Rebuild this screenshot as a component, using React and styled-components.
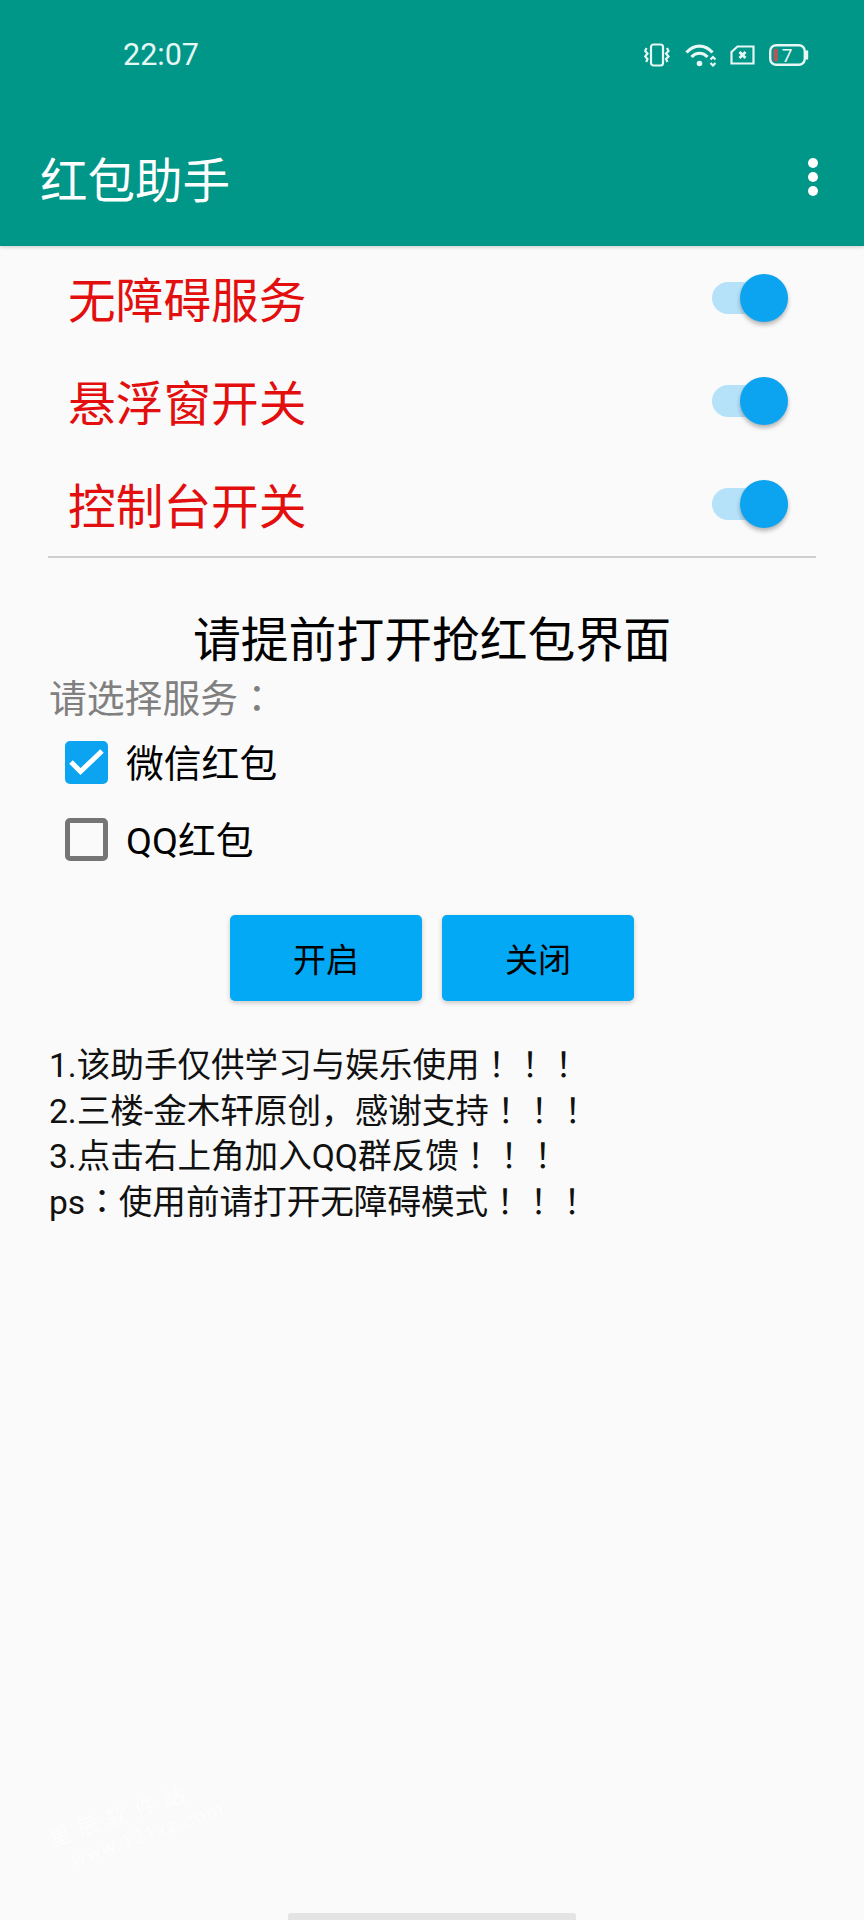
import styled, { createGlobalStyle } from "styled-components";

const GlobalStyle = createGlobalStyle`
    html, body {
        margin: 0;
        padding: 0;
        background: #fafafa;
    }
`;

const Page = styled.div`
    position: relative;
    width: 864px;
    height: 1920px;
    overflow: hidden;
    display: flex;
    flex-direction: column;
    background: #fafafa;
    color: #000;
    font-family: Roboto, "Noto Sans CJK SC", sans-serif;
`;

const Header = styled.header`
    background: #009688;
    height: 246px;
    box-shadow: 0 1px 4px rgba(0, 0, 0, 0.2);
    flex-shrink: 0;
`;

const StatusBar = styled.div`
    height: 110px;
    padding: 0 55px 0 123px;
    box-sizing: border-box;
    display: flex;
    align-items: center;
    justify-content: space-between;
    color: #e6f7f4;
`;

const Clock = styled.span`
    font-size: 30.5px;
    line-height: 36px;
`;

const StatusIcons = styled.div`
    display: flex;
    align-items: center;
    gap: 14px;
`;

const Toolbar = styled.div`
    height: 136px;
    padding: 0 46px 2px 40px;
    box-sizing: border-box;
    display: flex;
    align-items: center;
    justify-content: space-between;
`;

const AppTitle = styled.h1`
    margin: 0;
    font-size: 47.5px;
    font-weight: 400;
    color: #fff;
`;

const SwitchRow = styled.div`
    height: 103px;
    padding: 0 76px 0 68px;
    display: flex;
    align-items: center;
    justify-content: space-between;
`;

const SwitchLabel = styled.span`
    font-size: 47.7px;
    color: #e30e0e;
`;

const Track = styled.div`
    width: 76px;
    height: 32px;
    border-radius: 16px;
    background: #b5e1f9;
    display: flex;
    align-items: center;
    justify-content: flex-end;
`;

const Thumb = styled.div`
    width: 48px;
    height: 48px;
    border-radius: 50%;
    background: #0ca4f0;
    box-shadow: 0 3px 4px rgba(0, 0, 0, 0.28);
`;

const Divider = styled.div`
    height: 2px;
    margin: 1px 48px 0;
    background: #cfcfcf;
`;

const Notice = styled.div`
    margin-top: 48px;
    font-size: 47.8px;
    line-height: 70px;
    text-align: center;
`;

const SelectLabel = styled.div`
    padding-left: 49px;
    font-size: 37.8px;
    line-height: 46px;
    color: #808080;
`;

const CheckList = styled.div`
    margin-top: 2px;
    padding-left: 65px;
`;

const CheckRow = styled.div`
    height: 77px;
    display: flex;
    align-items: center;
    gap: 18px;
`;

const CheckText = styled.span`
    font-size: 37.8px;
    padding-bottom: 4px;
`;

const CheckBox = styled.div`
    width: 43px;
    height: 43px;
    box-sizing: border-box;
    border-radius: 5px;
    background: ${props => (props.$checked ? "#0ca4f0" : "transparent")};
    border: ${props => (props.$checked ? "none" : "5px solid #757575")};
`;

const ButtonRow = styled.div`
    margin-top: 37px;
    display: flex;
    justify-content: center;
    gap: 20px;
`;

const ActionButton = styled.button`
    width: 192px;
    height: 86px;
    padding: 0;
    border: none;
    border-radius: 5px;
    background: #03a9f4;
    color: #000;
    font-family: inherit;
    font-size: 33px;
    box-shadow: 0 2px 5px rgba(0, 0, 0, 0.2);
`;

const Notes = styled.div`
    margin-top: 42px;
    padding-left: 49px;
    font-size: 33.6px;
    line-height: 45.7px;
    color: #111;
`;

const Punct = styled.span`
    font-family: "Noto Sans CJK JP", sans-serif;
    line-height: 0;
`;

const HomeBar = styled.div`
    margin: auto auto 0;
    width: 288px;
    height: 7px;
    border-radius: 3px 3px 0 0;
    background: #e4e4e4;
`;

const Watermark = styled.div`
    position: absolute;
    left: 54px;
    top: 1826px;
    transform: rotate(-19deg);
    transform-origin: left center;
    color: #fff;
    opacity: 0.75;
    white-space: nowrap;
`;

const WatermarkName = styled.div`
    font-size: 22px;
    line-height: 28px;
    letter-spacing: 8px;
`;

const WatermarkUrl = styled.div`
    font-size: 19px;
    line-height: 24px;
    letter-spacing: 1.6px;
    margin-left: 14px;
`;

const VibrateIcon = () => (
    <svg width="27" height="24" viewBox="0 0 27 24" fill="none" stroke="currentColor" strokeWidth="2.2">
        <rect x="7" y="1.5" width="12" height="21" rx="2.5" />
        <path d="M2.5 5 L1.2 8 L3.5 10.5 L1.2 13.5 L3.5 16 L2.2 19" />
        <path d="M23 5 L24.5 8 L22 10.5 L24.5 13.5 L22 16 L23.5 19" />
    </svg>
);

const WifiIcon = () => (
    <svg width="31" height="24" viewBox="0 0 31 24" fill="none" stroke="currentColor">
        <path d="M1.5 9.5 C9 1 20 1 27.5 9.5" strokeWidth="3.2" />
        <path d="M6.5 14 C11 9 18 9 22.5 14" strokeWidth="3.2" />
        <circle cx="14.5" cy="20.5" r="2.8" fill="currentColor" stroke="none" />
        <path d="M25.5 16.5 L28 14 L30.5 16.5 M25.5 20 L28 22.5 L30.5 20" strokeWidth="2.2" />
    </svg>
);

const SimIcon = () => (
    <svg width="25" height="20" viewBox="0 0 25 20" fill="none" stroke="currentColor" strokeWidth="2.2">
        <path d="M7.5 1.5 H23.5 V18.5 H1.5 V7 Z" />
        <path d="M9.5 7 L15.5 13 M15.5 7 L9.5 13" strokeWidth="2.8" />
    </svg>
);

const BatteryIcon = () => (
    <svg width="40" height="22" viewBox="0 0 40 22" fill="none" stroke="currentColor">
        <rect x="1.2" y="1.2" width="34.6" height="19.6" rx="6" strokeWidth="2.4" />
        <path d="M38 7.5 V14.5" strokeWidth="2.4" strokeLinecap="round" />
        <rect x="4.5" y="4.5" width="4.5" height="13" rx="1.5" fill="#a85c5c" stroke="none" />
        <text x="18" y="18" fill="currentColor" stroke="none" fontSize="19" textAnchor="middle" fontFamily="Roboto, sans-serif">7</text>
    </svg>
);

const MoreIcon = () => (
    <svg width="10" height="38" viewBox="0 0 10 38" fill="#fff">
        <circle cx="5" cy="5" r="5" />
        <circle cx="5" cy="19" r="5" />
        <circle cx="5" cy="33" r="5" />
    </svg>
);

const CheckMark = () => (
    <svg width="43" height="43" viewBox="0 0 43 43" fill="none" stroke="#fff" strokeWidth="5">
        <path d="M6 21 L15.5 30.5 L37 10" />
    </svg>
);

const switches = ["无障碍服务", "悬浮窗开关", "控制台开关"];

const notes = [
    ["1.该助手仅供学习与娱乐使用", "！！！"],
    ["2.三楼-金木轩原创，感谢支持", "！！！"],
    ["3.点击右上角加入QQ群反馈", "！！！"],
];

const App = () => {
    return (
        <>
            <GlobalStyle />
            <Page>
                <Header>
                    <StatusBar>
                        <Clock>22:07</Clock>
                        <StatusIcons>
                            <VibrateIcon />
                            <WifiIcon />
                            <SimIcon />
                            <BatteryIcon />
                        </StatusIcons>
                    </StatusBar>
                    <Toolbar>
                        <AppTitle>红包助手</AppTitle>
                        <MoreIcon />
                    </Toolbar>
                </Header>

                {switches.map(label => (
                    <SwitchRow key={label}>
                        <SwitchLabel>{label}</SwitchLabel>
                        <Track><Thumb /></Track>
                    </SwitchRow>
                ))}
                <Divider />

                <Notice>请提前打开抢红包界面</Notice>
                <SelectLabel>请选择服务<Punct>：</Punct></SelectLabel>
                <CheckList>
                    <CheckRow>
                        <CheckBox $checked><CheckMark /></CheckBox>
                        <CheckText>微信红包</CheckText>
                    </CheckRow>
                    <CheckRow>
                        <CheckBox />
                        <CheckText>QQ红包</CheckText>
                    </CheckRow>
                </CheckList>

                <ButtonRow>
                    <ActionButton>开启</ActionButton>
                    <ActionButton>关闭</ActionButton>
                </ButtonRow>

                <Notes>
                    {notes.map(([text, mark]) => (
                        <div key={text}>{text}<Punct>{mark}</Punct></div>
                    ))}
                    <div>ps<Punct>：</Punct>使用前请打开无障碍模式<Punct>！！！</Punct></div>
                </Notes>

                <HomeBar />
                <Watermark>
                    <WatermarkName>星辰软件站</WatermarkName>
                    <WatermarkUrl>www.121xz.com</WatermarkUrl>
                </Watermark>
            </Page>
        </>
    );
};

export default App;
